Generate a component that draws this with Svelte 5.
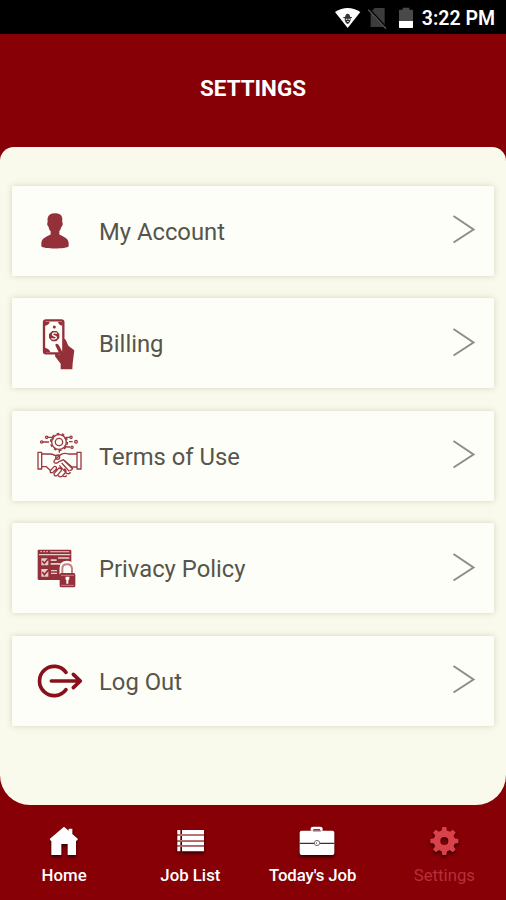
<script>
  let active = "Settings";

  const items = [
    { icon: "account", label: "My Account", box: "0 3 180 180" },
    { icon: "billing", label: "Billing", box: "0 10 180 180" },
    { icon: "terms", label: "Terms of Use", box: "0 3 180 180" },
    { icon: "privacy", label: "Privacy Policy", box: "0 -4 180 180" },
    { icon: "logout", label: "Log Out", box: "0 3 180 180" }
  ];

  const tabs = ["Home", "Job List", "Today's Job", "Settings"];
  const teeth = [0, 45, 90, 135, 180, 225, 270, 315];
</script>

<div class="screen">
  <div class="status">
    <svg class="wifi" width="26" height="20" viewBox="0 0 78 60">
      <path d="M0 12Q38-12 76 12L38 60Z" fill="#fff" />
      <path d="M25 27h5q2-10 8-10t8 10h5v3h-4v6q-3 10-9 12-7-2-9-12v-6h-4z" fill="#333" />
      <path d="M32 32h5v4h-5zM40 32h5v4h-5zM36 39h5v3h-5z" fill="#ccc" />
    </svg>
    <svg class="sim" width="20" height="22" viewBox="0 0 60 66">
      <path d="M20 3H50V60H8V15Z" fill="#3c3c3c" />
      <path d="M2 5L55 63" stroke="#000" stroke-width="7" />
      <path d="M1 8L54 65" stroke="#555" stroke-width="4" />
    </svg>
    <svg class="battery" width="14" height="22" viewBox="0 0 42 66">
      <path d="M0 8h11V2h20v6h11v34H0z" fill="#494949" />
      <path d="M0 42h42v19q0 2-2 2H2q-2 0-2-2z" fill="#fff" />
    </svg>
    <span>3:22 PM</span>
  </div>

  <header>SETTINGS</header>

  <main>
    {#each items as item}
      <button class="card">
        <svg class="icon" width="60" height="60" viewBox={item.box}>
          {#if item.icon === "account"}
            <path
              d="M75 40c14 0 22 6 22 18 0 4-1 6 0 8 3 6 0 13-3 15-2 7-4 10-6 13v9c4 6 28 8 28 27v9c-4 9-78 9-82 0v-9c0-19 24-21 28-27v-9c-3-3-5-6-6-13-4-3-6-10-3-15 0-5-1-8 0-12 2-9 9-14 22-14z"
              fill="#93303a"
            />
          {:else if item.icon === "billing"}
            <rect x="42" y="32" width="58" height="99" rx="6" fill="#fffef8" stroke="#93303a" stroke-width="7" />
            <path d="M45 36h14q-1 9-14 12zM97 36H84q1 9 13 12zM45 128h16q-2-11-16-14z" fill="#93303a" />
            <circle cx="73" cy="52" r="4.500" fill="#93303a" />
            <path d="M67 64h13l8 9v12l-9 10H66l-9-10V73z" fill="#93303a" />
            <path d="M81 71c-12-5-19 5-8 8s7 12-9 8" fill="none" stroke="#fffef8" stroke-width="4" />
            <path
              d="M78 103q6-2 10 6l11 22V88q3-3 8 2l8 18 18 14-5 39-1 18H92v-17l-17-22 1-11 14 7-13-27q-3-4 1-6z"
              fill="#93303a"
            />
          {:else if item.icon === "terms"}
            <g fill="none" stroke="#9b3943" stroke-width="4" stroke-linejoin="round">
              <path d="M39 51h18M128 50h-11M54 37h10l7 6M119 37h-9l-6 5M120 66h-9l-7-5" />
              <circle cx="35" cy="51" r="3.500" />
              <circle cx="138" cy="50" r="4" />
              <circle cx="50" cy="37" r="3.500" />
              <circle cx="123" cy="37" r="3.500" />
              <circle cx="126" cy="67" r="3.500" />
              <circle cx="87" cy="51" r="22" />
              <circle cx="87" cy="51" r="25" stroke-width="5" stroke-dasharray="8 7.700" />
              <circle cx="87" cy="51" r="11" />
              <path d="M24 82h11v50H24zM141 82h12v50h-12zM35 87h24q9 0 15 4l15-1M141 87h-26q-11-5-23 2L76 103q-8 8-1 11 5 3 14-5l11-5 26 22h15M35 125h14l14 13" />
              <path d="M61 137q-2 9 8 5l10-10q2-9-6-8zM72 146q0 9 9 6l13-15q1-8-7-8zM85 151q4 8 12 2l11-12q1-7-6-9M98 153q8 5 12-2M109 145q10 4 12-4M119 136q8 1 9-8M102 106l24 24M95 114l23 25M88 121l22 24" />
              <path d="M88 75v8" />
              <circle cx="83" cy="97" r="6" />
            </g>
          {:else if item.icon === "privacy"}
            <path d="M24 31h96q4 0 4 4v38h-8q-14-2-21 16v33H27q-4 0-4-4V34z" fill="#93303a" />
            <path d="M27 44h94v4H27zM60 36h58v3H60zM34 57h21v21H34zM34 89h21v23H34zM62 60h18v5H62zM62 71h30v5H62zM63 92h18v4H63zM63 100h18v4H63zM84 54h34v4H84z" fill="#e6cdca" />
            <path d="M31 37h5M40 37h5M49 37h5" stroke="#e6cdca" stroke-width="3" />
            <path d="M37 65l6 7 14-16M37 98l6 8 14-16" fill="none" stroke="#93303a" stroke-width="5" />
            <path d="M97 105V88q0-15 14-15t15 15v17" fill="none" stroke="#fffef8" stroke-width="17" />
            <path d="M97 105V88q0-13 14-13t15 13v17" fill="none" stroke="#c28484" stroke-width="6" />
            <rect x="89" y="101" width="47" height="43" rx="5" fill="#93303a" />
            <path d="M93 108h39M93 138h39" stroke="#c28484" stroke-width="3" />
            <path d="M107 112h11v7l-3 4v10h-6v-10l-3-4z" fill="#fffef8" />
          {:else}
            <g fill="none" stroke="#8a111c" stroke-width="11" stroke-linecap="round" stroke-linejoin="round">
              <path d="M108 67A44 44 0 1 0 108 119M64 93h86M130 73l21 20-21 20" />
            </g>
          {/if}
        </svg>
        <span class="label">{item.label}</span>
        <svg class="chevron" width="24" height="32" viewBox="0 0 24 32">
          <path d="M1.500 3L21.500 16.500L1.500 29.500" fill="none" stroke="#8d8d89" stroke-width="2" />
        </svg>
      </button>
    {/each}
  </main>

  <nav>
    {#each tabs as tab}
      <button class="tab" class:active={tab === active}>
        <svg width="36" height="32" viewBox="0 0 108 96">
          {#if tab === "Home"}
            <path d="M54 5L68 17V11h11v16l17 15-4 5h-2v43H65V57H46v33H16V47h-2l-3-5z" fill="#fff" />
          {:else if tab === "Job List"}
            <path d="M16 15h9v12h-9zM30 15h66v12H30zM16 33h9v12h-9zM30 33h66v12H30zM16 50h9v11h-9zM30 50h66v11H30zM16 66h9v13h-9zM30 66h66v13H30z" fill="#fff" />
            <path d="M16 27h80v6H16zM16 45h80v5H16zM16 61h80v5H16z" fill="#b87578" />
          {:else if tab === "Today's Job"}
            <path d="M39 17V12q0-3 4-3h20q4 0 4 3v5" fill="none" stroke="#fff" stroke-width="8" />
            <rect x="2" y="17" width="104" height="73" rx="6" fill="#fff" />
            <path d="M2 55h104" stroke="#5b2427" stroke-width="4" />
            <path d="M42 18h24" stroke="#bb8588" stroke-width="4" />
            <circle cx="54" cy="54" r="8" fill="#fff" stroke="#85787a" stroke-width="3" />
            <path d="M55 50l-4 4 4 4" fill="none" stroke="#70585b" stroke-width="2" />
          {:else}
            <g fill="#d9414b">
              {#each teeth as angle}
                <path d="M46 22l3-16h12l3 16z" transform="rotate({angle} 55 48)" />
              {/each}
            </g>
            <circle cx="55" cy="48" r="22" fill="none" stroke="#d9414b" stroke-width="20" />
          {/if}
        </svg>
        <span class:wide={tab === "Today's Job"}>{tab}</span>
      </button>
    {/each}
  </nav>
</div>

<style>
  :global(body) {
    margin: 0;
    background: #860006;
  }

  .screen {
    display: flex;
    flex-direction: column;
    width: 506px;
    height: 900px;
    overflow: hidden;
    background: #860006;
    font-family: Roboto, sans-serif;
  }

  .status {
    display: flex;
    align-items: center;
    justify-content: flex-end;
    box-sizing: border-box;
    height: 34px;
    padding: 2px 11px 0 0;
    background: #000;
    color: #fff;
    font-size: 19.500px;
    font-weight: 600;
  }

  .wifi {
    margin-right: 7px;
  }

  .sim {
    margin-right: 11px;
  }

  .battery {
    margin-right: 9px;
  }

  header {
    height: 112.500px;
    line-height: 108px;
    color: #fff;
    font-size: 22.400px;
    font-weight: 700;
    text-align: center;
  }

  main {
    display: flex;
    flex-direction: column;
    gap: 22.500px;
    box-sizing: border-box;
    height: 658.500px;
    padding: 39px 12.500px 0 12px;
    border-radius: 14px 14px 30px 30px;
    background: #fafaec;
  }

  button {
    border: none;
    cursor: pointer;
    font-family: inherit;
  }

  .card {
    display: flex;
    align-items: center;
    height: 90px;
    padding: 0 18px 0 17.500px;
    border-radius: 2px;
    background: #fefef8;
    box-shadow: 0 0 6px rgba(80, 80, 60, 0.22);
  }

  .label {
    flex: 1;
    margin: 2px 0 0 9.500px;
    color: #55554b;
    font-size: 23.800px;
    text-align: left;
  }

  .chevron {
    margin-bottom: 3px;
  }

  nav {
    display: flex;
    padding: 20px 0 0 1px;
  }

  .tab {
    display: flex;
    flex-direction: column;
    align-items: center;
    gap: 8px;
    width: 126.500px;
    padding: 0;
    background: none;
    color: #fff;
    font-size: 16.800px;
    font-weight: 500;
  }

  .tab svg {
    filter: drop-shadow(0 2px 1.500px rgba(0, 0, 0, 0.65));
  }

  .wide {
    margin-right: 8px;
    letter-spacing: -0.1px;
  }

  .tab.active {
    padding-left: 3px;
    color: #b82f38;
    font-weight: 400;
  }
</style>
